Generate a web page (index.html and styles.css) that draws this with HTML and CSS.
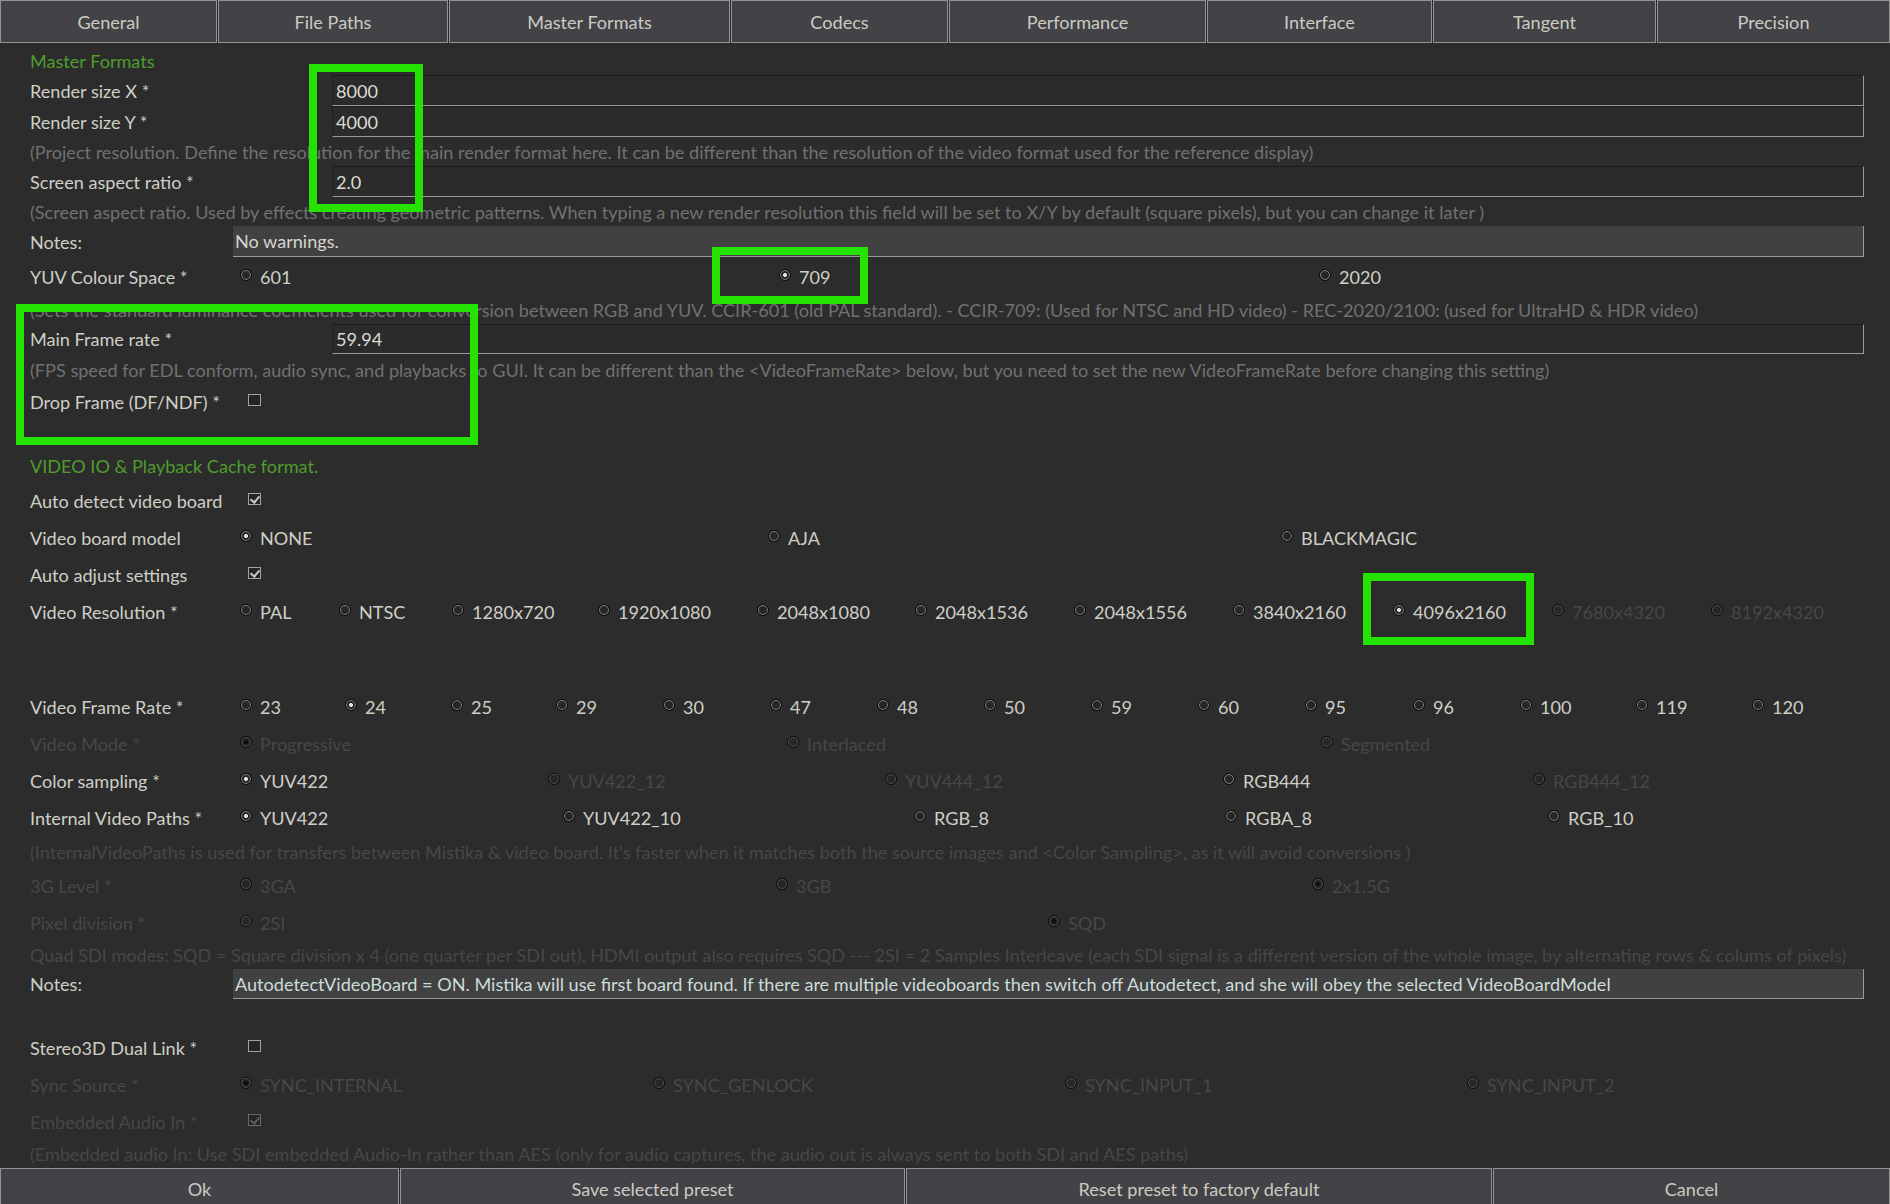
FILE: index.html
```html
<!DOCTYPE html>
<html lang="en">
<head>
<meta charset="utf-8">
<title>Preferences</title>
<link rel="stylesheet" href="styles.css">
</head>
<body>
<div class="window">
  <nav class="tabs">
    <div class="tab">General</div>
    <div class="tab">File Paths</div>
    <div class="tab">Master Formats</div>
    <div class="tab">Codecs</div>
    <div class="tab">Performance</div>
    <div class="tab">Interface</div>
    <div class="tab">Tangent</div>
    <div class="tab">Precision</div>
  </nav>

  <main class="form">
    <div class="section h29">Master Formats</div>
    <div class="row h31"><span class="label w-field">Render size X *</span><div class="entry">8000</div></div>
    <div class="row h31"><span class="label w-field">Render size Y *</span><div class="entry">4000</div></div>
    <div class="hint h29">(Project resolution. Define the resolution for the main render format here. It can be different than the resolution of the video format used for the reference display)</div>
    <div class="row h31"><span class="label w-field">Screen aspect ratio *</span><div class="entry">2.0</div></div>
    <div class="hint h29">(Screen aspect ratio. Used by effects creating geometric patterns. When typing a new render resolution this field will be set to X/Y by default (square pixels), but you can change it later )</div>
    <div class="row h31"><span class="label w-notes">Notes:</span><div class="notes">No warnings.</div></div>
    <div class="row h39"><span class="label w-choice">YUV Colour Space *</span>
      <div class="choices cols-yuv">
        <span class="opt"><i class="radio"></i>601</span>
        <span class="opt"><i class="radio on"></i>709</span>
        <span class="opt"><i class="radio"></i>2020</span>
      </div>
    </div>
    <div class="hint h28">(Sets the standard luminance coefficients used for conversion between RGB and YUV. CCIR-601 (old PAL standard). - CCIR-709: (Used for NTSC and HD video) - REC-2020/2100: (used for UltraHD &amp; HDR video)</div>
    <div class="row h30"><span class="label w-field">Main Frame rate *</span><div class="entry">59.94</div></div>
    <div class="hint h32">(FPS speed for EDL conform, audio sync, and playbacks to GUI. It can be different than the &lt;VideoFrameRate&gt; below, but you need to set the new VideoFrameRate before changing this setting)</div>
    <div class="row h32"><span class="label w-check">Drop Frame (DF/NDF) *</span><i class="check"></i></div>
    <div class="spacer h32"></div>

    <div class="section h32">VIDEO IO &amp; Playback Cache format.</div>
    <div class="row h37"><span class="label w-check">Auto detect video board</span><i class="check on"></i></div>
    <div class="row h37"><span class="label w-choice">Video board model</span>
      <div class="choices cols-board">
        <span class="opt"><i class="radio on"></i>NONE</span>
        <span class="opt"><i class="radio"></i>AJA</span>
        <span class="opt"><i class="radio"></i>BLACKMAGIC</span>
      </div>
    </div>
    <div class="row h37"><span class="label w-check">Auto adjust settings</span><i class="check on"></i></div>
    <div class="row h37"><span class="label w-choice">Video Resolution *</span>
      <div class="choices cols-res">
        <span class="opt"><i class="radio"></i>PAL</span>
        <span class="opt"><i class="radio"></i>NTSC</span>
        <span class="opt"><i class="radio"></i>1280x720</span>
        <span class="opt"><i class="radio"></i>1920x1080</span>
        <span class="opt"><i class="radio"></i>2048x1080</span>
        <span class="opt"><i class="radio"></i>2048x1536</span>
        <span class="opt"><i class="radio"></i>2048x1556</span>
        <span class="opt"><i class="radio"></i>3840x2160</span>
        <span class="opt"><i class="radio on"></i>4096x2160</span>
        <span class="opt off"><i class="radio"></i>7680x4320</span>
        <span class="opt off"><i class="radio"></i>8192x4320</span>
      </div>
    </div>
    <div class="spacer h58"></div>

    <div class="row h37"><span class="label w-choice">Video Frame Rate *</span>
      <div class="choices cols-fps">
        <span class="opt"><i class="radio"></i>23</span>
        <span class="opt"><i class="radio on"></i>24</span>
        <span class="opt"><i class="radio"></i>25</span>
        <span class="opt"><i class="radio"></i>29</span>
        <span class="opt"><i class="radio"></i>30</span>
        <span class="opt"><i class="radio"></i>47</span>
        <span class="opt"><i class="radio"></i>48</span>
        <span class="opt"><i class="radio"></i>50</span>
        <span class="opt"><i class="radio"></i>59</span>
        <span class="opt"><i class="radio"></i>60</span>
        <span class="opt"><i class="radio"></i>95</span>
        <span class="opt"><i class="radio"></i>96</span>
        <span class="opt"><i class="radio"></i>100</span>
        <span class="opt"><i class="radio"></i>119</span>
        <span class="opt"><i class="radio"></i>120</span>
      </div>
    </div>
    <div class="row h37 disabled"><span class="label w-choice">Video Mode *</span>
      <div class="choices cols-mode">
        <span class="opt"><i class="radio on"></i>Progressive</span>
        <span class="opt"><i class="radio"></i>Interlaced</span>
        <span class="opt"><i class="radio"></i>Segmented</span>
      </div>
    </div>
    <div class="row h37"><span class="label w-choice">Color sampling *</span>
      <div class="choices cols-sampling">
        <span class="opt"><i class="radio on"></i>YUV422</span>
        <span class="opt off"><i class="radio"></i>YUV422_12</span>
        <span class="opt off"><i class="radio"></i>YUV444_12</span>
        <span class="opt"><i class="radio"></i>RGB444</span>
        <span class="opt off"><i class="radio"></i>RGB444_12</span>
      </div>
    </div>
    <div class="row h37"><span class="label w-choice">Internal Video Paths *</span>
      <div class="choices cols-paths">
        <span class="opt"><i class="radio on"></i>YUV422</span>
        <span class="opt"><i class="radio"></i>YUV422_10</span>
        <span class="opt"><i class="radio"></i>RGB_8</span>
        <span class="opt"><i class="radio"></i>RGBA_8</span>
        <span class="opt"><i class="radio"></i>RGB_10</span>
      </div>
    </div>
    <div class="hint h31 disabled">(InternalVideoPaths is used for transfers between Mistika &amp; video board. It's faster when it matches both the source images and &lt;Color Sampling&gt;, as it will avoid conversions )</div>
    <div class="row h37 disabled"><span class="label w-choice">3G Level *</span>
      <div class="choices cols-level">
        <span class="opt"><i class="radio"></i>3GA</span>
        <span class="opt"><i class="radio"></i>3GB</span>
        <span class="opt"><i class="radio on"></i>2x1.5G</span>
      </div>
    </div>
    <div class="row h37 disabled"><span class="label w-choice">Pixel division *</span>
      <div class="choices cols-division">
        <span class="opt"><i class="radio"></i>2SI</span>
        <span class="opt"><i class="radio on"></i>SQD</span>
      </div>
    </div>
    <div class="hint h28 disabled">Quad SDI modes: SQD = Square division x 4 (one quarter per SDI out), HDMI output also requires SQD --- 2SI = 2 Samples Interleave (each SDI signal is a different version of the whole image, by alternating rows &amp; colums of pixels)</div>
    <div class="row h30"><span class="label w-notes">Notes:</span><div class="notes info">AutodetectVideoBoard = ON. Mistika will use first board found. If there are multiple videoboards then switch off Autodetect, and she will obey the selected VideoBoardModel</div></div>
    <div class="spacer h30"></div>

    <div class="row h37"><span class="label w-check">Stereo3D Dual Link *</span><i class="check"></i></div>
    <div class="row h37 disabled"><span class="label w-choice">Sync Source *</span>
      <div class="choices cols-sync">
        <span class="opt"><i class="radio on"></i>SYNC_INTERNAL</span>
        <span class="opt"><i class="radio"></i>SYNC_GENLOCK</span>
        <span class="opt"><i class="radio"></i>SYNC_INPUT_1</span>
        <span class="opt"><i class="radio"></i>SYNC_INPUT_2</span>
      </div>
    </div>
    <div class="row h37 disabled"><span class="label w-check">Embedded Audio In *</span><i class="check on"></i></div>
    <div class="hint h28 disabled">(Embedded audio In: Use SDI embedded Audio-In rather than AES (only for audio captures, the audio out is always sent to both SDI and AES paths)</div>
  </main>

  <footer class="buttons">
    <div class="button">Ok</div>
    <div class="button">Save selected preset</div>
    <div class="button">Reset preset to factory default</div>
    <div class="button">Cancel</div>
  </footer>

  <!-- highlight frames drawn on top of the dialog -->
  <div class="frame frame-size"></div>
  <div class="frame frame-709"></div>
  <div class="frame frame-rate"></div>
  <div class="frame frame-4k"></div>
</div>
</body>
</html>
```

FILE: styles.css
```css
* { box-sizing: border-box; }

html, body {
  margin: 0;
  height: 100%;
  background: #2c2c2c;
}

body {
  font-family: "Lato", "Liberation Sans", sans-serif;
  font-size: 18.1px;
  color: #cfcfc6;
  overflow: hidden;
}

.window {
  position: relative;
  height: 100vh;
  display: flex;
  flex-direction: column;
}

/* tab bar */
.tabs {
  display: grid;
  grid-template-columns: 217px 230px 281px 217px 257px 225px 223px 1fr;
  gap: 1px;
  height: 43px;
  flex: none;
}

.tab {
  display: flex;
  align-items: center;
  justify-content: center;
  background: #434247;
  border: 1px solid #939393;
  color: #cbcbc2;
  white-space: nowrap;
}

/* form body */
.form {
  flex: 1;
  padding: 3px 26px 0 30px;
  display: flex;
  flex-direction: column;
}

.row, .section, .hint, .spacer {
  flex: none;
  display: flex;
  align-items: center;
  white-space: nowrap;
}

.h28 { height: 28px; }
.h29 { height: 29px; }
.h30 { height: 30px; }
.h31 { height: 31px; }
.h32 { height: 32px; }
.h37 { height: 37px; }
.h39 { height: 39px; }
.h58 { height: 58px; }

.section { color: #4f9d2c; }

.hint { color: #717171; }
.hint.disabled { color: #474747; }

.label { flex: none; }
.w-field { width: 302px; }
.w-notes { width: 203px; }
.w-choice { width: 210px; }
.w-check { width: 218px; }

.disabled .label { color: #474747; }

/* single-line text entries */
.entry {
  flex: 1;
  align-self: stretch;
  display: flex;
  align-items: center;
  padding-left: 3px;
  background: #2b2b2b;
  border-top: 1px solid #1b1b1b;
  border-left: 1px solid #1f1f1f;
  border-right: 1px solid #9a9a9a;
  border-bottom: 1px solid #9a9a9a;
  color: #dcdcd4;
}

/* read-only notes line */
.notes {
  flex: 1;
  align-self: stretch;
  display: flex;
  align-items: center;
  padding-left: 2px;
  background: #414141;
  border-right: 1px solid #9a9a9a;
  border-bottom: 1px solid #9a9a9a;
  color: #d6d6ce;
}
.notes.info { color: #cbdcda; }

/* radio groups */
.choices {
  flex: 1;
  display: grid;
  align-items: center;
}

.cols-yuv { grid-template-columns: 539px 540px 1fr; }
.cols-board { grid-template-columns: 528px 513px 1fr; }
.cols-res { grid-template-columns: 99px 113px 146px 159px 158px 159px 159px 160px 159px 159px 1fr; }
.cols-fps { grid-template-columns: 105px 106px 105px 107px 107px 107px 107px 107px 107px 107px 108px 107px 116px 116px 1fr; }
.cols-mode { grid-template-columns: 547px 534px 1fr; }
.cols-sampling { grid-template-columns: 308px 337px 338px 310px 1fr; }
.cols-paths { grid-template-columns: 323px 351px 311px 323px 1fr; }
.cols-level { grid-template-columns: 536px 536px 1fr; }
.cols-division { grid-template-columns: 808px 1fr; }
.cols-sync { grid-template-columns: 413px 412px 402px 1fr; }

.opt {
  display: flex;
  align-items: center;
  gap: 8px;
  white-space: nowrap;
}
.opt.off, .disabled .opt { color: #474747; }

/* round indicator: dark rim with a thin light ring inside */
.radio {
  flex: none;
  width: 12px;
  height: 12px;
  margin-top: -3px;
  border-radius: 50%;
  border: 1px solid #0a0a0a;
  background: #262626;
  box-shadow: inset 0 0 0 1px #8e8e8a;
}
.radio.on {
  background: radial-gradient(circle, #e6e4da 0 1.6px, #262626 2.3px);
}
.opt.off .radio, .disabled .radio {
  box-shadow: inset 0 0 0 1px #585858;
}
.disabled .radio.on {
  background: radial-gradient(circle, #0e0e0e 0 2px, #262626 2.7px);
}

/* check boxes */
.check {
  flex: none;
  position: relative;
  width: 13px;
  height: 12px;
  margin-top: -4px;
  border: 1px solid #a2a2a2;
  background: #252525;
}
.check.on::after {
  content: "";
  position: absolute;
  left: 3px;
  top: 0px;
  width: 4px;
  height: 7px;
  border-right: 2px solid #c8c8c0;
  border-bottom: 2px solid #c8c8c0;
  transform: rotate(40deg);
}
.disabled .check { border-color: #6a6a6a; }
.disabled .check.on::after { border-color: #5c5c5c; }

/* dialog buttons */
.buttons {
  flex: none;
  height: 36px;
  display: grid;
  grid-template-columns: 399px 505px 586px 1fr;
  gap: 1px;
}

.button {
  display: flex;
  align-items: center;
  justify-content: center;
  padding-top: 5px;
  background: #434247;
  border: 1px solid #939393;
  border-bottom: none;
  color: #cbcbc2;
}

/* bright highlight frames */
.frame {
  position: absolute;
  border: 8px solid #24e300;
  pointer-events: none;
}
.frame-size { left: 309px; top: 64px; width: 114px; height: 148px; }
.frame-709 { left: 712px; top: 247px; width: 156px; height: 57px; }
.frame-rate { left: 16px; top: 304px; width: 462px; height: 141px; }
.frame-4k { left: 1363px; top: 573px; width: 171px; height: 72px; }
```
